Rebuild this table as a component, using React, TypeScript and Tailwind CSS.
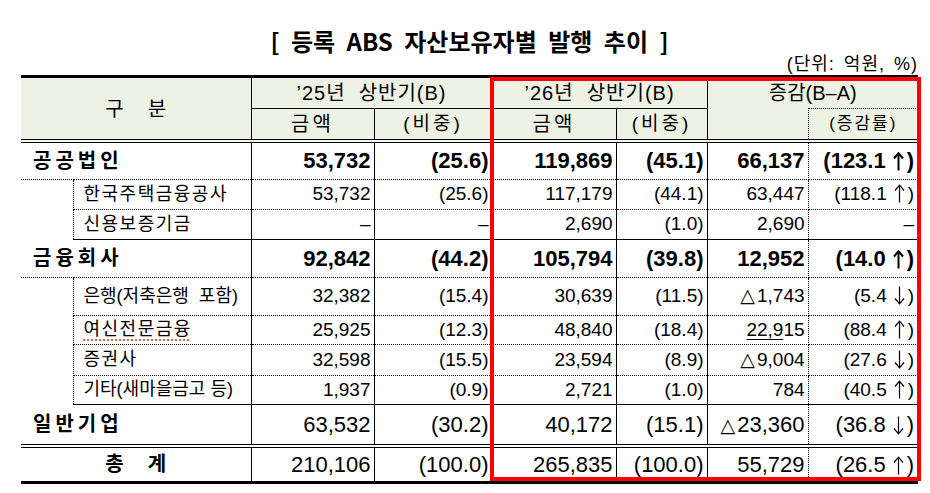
import React from 'react';

type Row = {
  label: string;
  kind: 'group' | 'sub' | 'total';
  v: string[];
  span?: number;
  h: string;
  bottom: 'dot' | 'solid' | 'double' | 'none';
};

const rows: Row[] = [
  { label: '공공법인', kind: 'group', v: ['53,732', '(25.6)', '119,869', '(45.1)', '66,137', '(123.1 ↑)'], h: 'h-[38px]', bottom: 'dot' },
  { label: '한국주택금융공사', kind: 'sub', span: 2, v: ['53,732', '(25.6)', '117,179', '(44.1)', '63,447', '(118.1 ↑)'], h: 'h-[30px]', bottom: 'dot' },
  { label: '신용보증기금', kind: 'sub', v: ['–', '–', '2,690', '(1.0)', '2,690', '–'], h: 'h-[30px]', bottom: 'solid' },
  { label: '금융회사', kind: 'group', v: ['92,842', '(44.2)', '105,794', '(39.8)', '12,952', '(14.0 ↑)'], h: 'h-[38px]', bottom: 'dot' },
  { label: '은행(저축은행  포함)', kind: 'sub', span: 4, v: ['32,382', '(15.4)', '30,639', '(11.5)', '△1,743', '(5.4 ↓)'], h: 'h-[38px]', bottom: 'dot' },
  { label: '여신전문금융', kind: 'sub', v: ['25,925', '(12.3)', '48,840', '(18.4)', '22,915', '(88.4 ↑)'], h: 'h-[28px]', bottom: 'dot' },
  { label: '증권사', kind: 'sub', v: ['32,598', '(15.5)', '23,594', '(8.9)', '△9,004', '(27.6 ↓)'], h: 'h-[28px]', bottom: 'dot' },
  { label: '기타(새마을금고 등)', kind: 'sub', v: ['1,937', '(0.9)', '2,721', '(1.0)', '784', '(40.5 ↑)'], h: 'h-[28px]', bottom: 'solid' },
  { label: '일반기업', kind: 'group', v: ['63,532', '(30.2)', '40,172', '(15.1)', '△23,360', '(36.8 ↓)'], h: 'h-[41px]', bottom: 'double' },
  { label: '총 계', kind: 'total', v: ['210,106', '(100.0)', '265,835', '(100.0)', '55,729', '(26.5 ↑)'], h: 'h-[36px]', bottom: 'none' },
];

const bottomCls = {
  dot: 'border-b [border-bottom-style:dotted]',
  solid: 'border-b [border-bottom-style:solid]',
  double: 'border-b-[4px] [border-bottom-style:double]',
  none: '',
};

function Arrow({ up, bold }: { up: boolean; bold: boolean }) {
  return (
    <svg
      width="11"
      height="19"
      viewBox="0 0 11 19"
      className={`inline-block align-[-3px] ml-[7px] mr-[3px] ${up ? '' : 'rotate-180'}`}
    >
      <path
        d="M5.5 18.5V1.5M1 6.5L5.5 1.2L10 6.5"
        stroke="currentColor"
        strokeWidth={bold ? 2 : 1.2}
        fill="none"
      />
    </svg>
  );
}

function Value({ text, bold }: { text: string; bold: boolean }) {
  if (text === '22,915') {
    return (
      <>
        <span className="underline underline-offset-[3px]">22,9</span>15
      </>
    );
  }
  const m = text.match(/^\((.+) ([↑↓])\)$/);
  if (m) {
    return (
      <>
        ({m[1]}
        <Arrow up={m[2] === '↑'} bold={bold} />)
      </>
    );
  }
  if (text.startsWith('△')) {
    return (
      <>
        <span className="font-['DejaVu_Sans'] font-normal text-[19px] mr-[2px]">△</span>
        {text.slice(1)}
      </>
    );
  }
  return <>{text}</>;
}

export default function App() {
  const hdr = 'bg-[#eef2e4] text-center font-normal border-black';
  return (
    <div className="w-[930px] h-[493px] bg-white relative font-['Liberation_Sans','Noto_Sans_CJK_KR',sans-serif] text-black">
      <div className="pl-[21px] pt-[28px]">
        <h1 className="w-[897px] text-center text-[24px] leading-[26px] font-bold font-['Noto_Sans_CJK_KR',sans-serif] [word-spacing:6px]">
          [ 등록 ABS 자산보유자별 발행 추이 ]
        </h1>
        <div className="w-[897px] text-right text-[18px] leading-[20px] tracking-[1px] [word-spacing:3px]">(단위: 억원, %)</div>

        <table className="mt-[1px] w-[897px] table-fixed border-collapse border-t-[3px] border-b-[3px] border-black">
          <colgroup>
            <col className="w-[52px]" />
            <col className="w-[178px]" />
            <col className="w-[123px]" />
            <col className="w-[118px]" />
            <col className="w-[124px]" />
            <col className="w-[91px]" />
            <col className="w-[101px]" />
            <col className="w-[110px]" />
          </colgroup>
          <thead>
            <tr className="h-[28px]">
              <th colSpan={2} rowSpan={2} className={`${hdr} text-[20px] border-r border-b-[4px] [border-bottom-style:double]`}>
                <span>구</span>
                <span className="ml-[24px]">분</span>
              </th>
              <th colSpan={2} className={`${hdr} text-[20px] tracking-[1px] border-r border-b`}>
                ’25년&nbsp; 상반기(B)
              </th>
              <th colSpan={2} className={`${hdr} text-[20px] tracking-[1px] border-r border-b`}>
                ’26년&nbsp; 상반기(B)
              </th>
              <th colSpan={2} className={`${hdr} text-[20px]`}>
                증감(B–A)
              </th>
            </tr>
            <tr className="h-[30px]">
              <th className={`${hdr} text-[20px] font-bold tracking-[3px] border-r border-b-[4px] [border-bottom-style:double]`}>금액</th>
              <th className={`${hdr} text-[19px] tracking-[3px] border-r border-b-[4px] [border-bottom-style:double]`}>(비중)</th>
              <th className={`${hdr} text-[20px] font-bold tracking-[3px] border-r border-b-[4px] [border-bottom-style:double]`}>금액</th>
              <th className={`${hdr} text-[19px] tracking-[3px] border-r border-b-[4px] [border-bottom-style:double]`}>(비중)</th>
              <th className={`${hdr} border-r [border-right-style:dotted] border-b-[4px] [border-bottom-style:double]`}></th>
              <th className={`${hdr} text-[17px] tracking-[2px] border-t [border-top-style:dotted] border-b-[4px] [border-bottom-style:double]`}>
                (증감률)
              </th>
            </tr>
          </thead>
          <tbody>
            {rows.map((r, i) => {
              const b = `${bottomCls[r.bottom]} border-black`;
              const big = r.kind !== 'sub';
              const boldNum = r.kind === 'group' && r.label !== '일반기업';
              const numCls = big ? `text-[22px] ${boldNum ? 'font-bold' : 'font-normal'}` : 'text-[19px]';
              const tight = r.label.includes('(');
              return (
                <tr key={i} className={r.h}>
                  {r.kind === 'sub' ? (
                    <>
                      {r.span && <td rowSpan={r.span} className="border-r [border-right-style:dotted] border-black" />}
                      <td
                        className={`${b} border-r pl-[10px] text-[18px] whitespace-pre ${
                          tight ? 'tracking-[0px]' : 'tracking-[1.5px]'
                        }`}
                      >
                        {r.label === '여신전문금융' ? (
                          <span className="underline decoration-dotted decoration-[#e0502c] underline-offset-[4px]">
                            {r.label}
                          </span>
                        ) : (
                          r.label
                        )}
                      </td>
                    </>
                  ) : r.kind === 'group' ? (
                    <td colSpan={2} className={`${b} border-r pl-[12px] text-[20px] font-bold tracking-[4px]`}>
                      {r.label}
                    </td>
                  ) : (
                    <td colSpan={2} className={`${b} border-r text-center text-[20px] font-bold`}>
                      <span>총</span>
                      <span className="ml-[24px]">계</span>
                    </td>
                  )}
                  {r.v.map((v, j) => (
                    <td
                      key={j}
                      className={`${b} ${numCls} text-right whitespace-nowrap ${
                        j === 4 ? 'border-r [border-right-style:dotted]' : j < 4 ? 'border-r' : ''
                      } ${j === 5 ? 'pr-[4px]' : 'pr-[3px]'}`}
                    >
                      <Value text={v} bold={boldNum} />
                    </td>
                  ))}
                </tr>
              );
            })}
          </tbody>
        </table>
      </div>
      <div className="absolute left-[490px] top-[77px] w-[431px] h-[404px] border-4 border-[#ff0000] pointer-events-none" />
    </div>
  );
}
